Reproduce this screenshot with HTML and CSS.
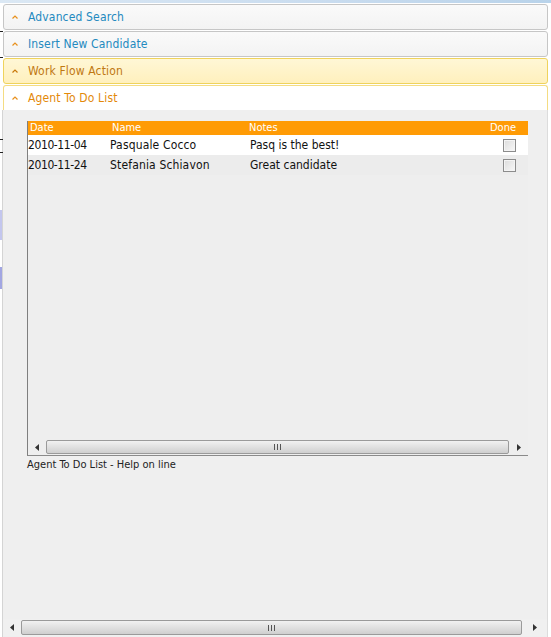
FILE: index.html
```html
<!DOCTYPE html>
<html>
<head>
<meta charset="utf-8">
<link rel="stylesheet" href="styles.css">
</head>
<body>
<div class="topstrip"></div>
<div class="edge-marks">
  <span class="mark m1"></span><span class="mark m2"></span><span class="mark m3"></span><span class="mark m4"></span>
  <span class="bluebar b1"></span><span class="bluebar b2"></span>
</div>
<div class="accordion">
  <div class="acc-head plain">
    <svg class="caret" viewBox="0 0 6 4" width="6" height="4"><path d="M0.5 3.5 L3 1 L5.5 3.5" fill="none" stroke="#e8901c" stroke-width="1.2"/></svg>
    <span>Advanced Search</span>
  </div>
  <div class="acc-head plain">
    <svg class="caret" viewBox="0 0 6 4" width="6" height="4"><path d="M0.5 3.5 L3 1 L5.5 3.5" fill="none" stroke="#e8901c" stroke-width="1.2"/></svg>
    <span>Insert New Candidate</span>
  </div>
  <div class="acc-head hover">
    <svg class="caret" viewBox="0 0 6 4" width="6" height="4"><path d="M0.5 3.5 L3 1 L5.5 3.5" fill="none" stroke="#c9780a" stroke-width="1.2"/></svg>
    <span>Work Flow Action</span>
  </div>
  <div class="acc-head active">
    <svg class="caret" viewBox="0 0 6 4" width="6" height="4"><path d="M0.5 3.5 L3 1 L5.5 3.5" fill="none" stroke="#e8901c" stroke-width="1.2"/></svg>
    <span>Agent To Do List</span>
  </div>
  <div class="panel">
    <div class="panel-inner">
      <div class="grid">
        <div class="grid-head">
          <span class="c-date">Date</span>
          <span class="c-name">Name</span>
          <span class="c-notes">Notes</span>
          <span class="c-done">Done</span>
        </div>
        <div class="row odd">
          <span class="c-date">2010-11-04</span>
          <span class="c-name">Pasquale Cocco</span>
          <span class="c-notes">Pasq is the best!</span>
          <span class="c-done"><span class="chk"></span></span>
        </div>
        <div class="row even">
          <span class="c-date">2010-11-24</span>
          <span class="c-name">Stefania Schiavon</span>
          <span class="c-notes">Great candidate</span>
          <span class="c-done"><span class="chk"></span></span>
        </div>
        <div class="grid-fill"></div>
        <div class="hscroll inner">
          <span class="arrow"><svg viewBox="0 0 4 7" width="4" height="7"><path d="M4 0 L0 3.5 L4 7Z" fill="#333"/></svg></span>
          <span class="thumb"><span class="grip"></span></span>
          <span class="arrow"><svg viewBox="0 0 4 7" width="4" height="7"><path d="M0 0 L4 3.5 L0 7Z" fill="#333"/></svg></span>
        </div>
      </div>
      <div class="help">Agent To Do List - Help on line</div>
    </div>
    <div class="hscroll outer">
      <span class="arrow"><svg viewBox="0 0 4 7" width="4" height="7"><path d="M4 0 L0 3.5 L4 7Z" fill="#333"/></svg></span>
      <span class="thumb"><span class="grip"></span></span>
      <span class="arrow"><svg viewBox="0 0 4 7" width="4" height="7"><path d="M0 0 L4 3.5 L0 7Z" fill="#333"/></svg></span>
    </div>
  </div>
</div>
</body>
</html>
```

FILE: styles.css
```css
html, body {
  margin: 0;
  padding: 0;
  background: #ffffff;
  width: 551px;
  height: 637px;
  overflow: hidden;
}
body {
  position: relative;
  font-family: "DejaVu Sans Condensed", "DejaVu Sans", sans-serif;
  font-size: 11px;
  color: #111;
}
.topstrip {
  height: 3px;
  background: linear-gradient(to right, #dbe8f4, #c9dcef 60%, #b9d3ea);
}
.edge-marks { position: absolute; left: 0; top: 0; width: 551px; height: 637px; pointer-events: none; }
.mark { position: absolute; left: 0; width: 3px; height: 1px; background: #222; }
.m1 { top: 31px; }
.m2 { top: 57px; }
.m3 { top: 139px; }
.m4 { top: 152px; }
.bluebar { position: absolute; left: 0; width: 2px; background: #c3c6ee; }
.b1 { top: 210px; height: 30px; }
.b2 { top: 267px; height: 22px; background: #a2a6e2; }

.accordion {
  margin: 1px 3px 0 3px;
  display: flex;
  flex-direction: column;
  gap: 1px;
}
.acc-head {
  box-sizing: border-box;
  height: 26px;
  border: 1px solid #c6c6c6;
  border-radius: 3px;
  display: flex;
  align-items: center;
  padding-left: 8px;
  gap: 10px;
  font-family: "DejaVu Sans Condensed", "DejaVu Sans", sans-serif;
  font-size: 12px;
  letter-spacing: 0.15px;
}
.acc-head .caret { flex: none; margin-top: -1px; }
.acc-head.plain {
  background: linear-gradient(#fafafa, #f3f3f3);
  color: #2389bf;
}
.acc-head.hover {
  background: linear-gradient(#fff7d6, #fff0bd);
  border-color: #efd35c;
  color: #c07812;
}
.acc-head.active {
  background: #ffffff;
  border-color: #f4dc82;
  border-bottom: none;
  border-radius: 3px 3px 0 0;
  color: #e3890a;
  height: 25px;
}
.panel {
  margin-top: -1px;
  margin-left: -1px;
  margin-right: 0;
  height: 527px;
  box-sizing: border-box;
  background: #efefef;
  border-left: 1px solid #d4d4d4;
  border-right: 1px solid #dcdcdc;
  display: flex;
  flex-direction: column;
  justify-content: space-between;
}
.panel-inner {
  padding: 11px 0 0 24px;
}
.grid {
  width: 501px;
  height: 335px;
  box-sizing: border-box;
  border-left: 1px solid #7f7f7f;
  border-bottom: 1px solid #8a8a8a;
  display: flex;
  flex-direction: column;
  background: #eeeeee;
}
.grid-head, .row {
  display: grid;
  grid-template-columns: 82px 139px 1fr 60px;
  align-items: center;
}
.grid-head {
  height: 14px;
  background: #ff9b05;
  color: #ffffff;
  font-size: 11px;
  line-height: 14px;
}
.grid-head .c-date { padding-left: 2px; }
.grid-head .c-name { padding-left: 2px; }
.grid-head .c-done { text-align: right; padding-right: 12px; }
.row {
  height: 20px;
  font-size: 12px;
  color: #111;
}
.row .c-date { letter-spacing: -0.4px; }
.row .c-name { letter-spacing: 0.15px; }
.row.odd { background: #ffffff; }
.row.even { background: #ececec; }
.row .c-notes { padding-left: 1px; }
.row .c-done { display: flex; justify-content: flex-end; padding-right: 12px; }
.chk {
  width: 11px;
  height: 11px;
  border: 1px solid #8c8c8c;
  background: linear-gradient(135deg, #dcdcdc, #f8f8f8);
  box-shadow: inset 0 0 0 1px #f4f4f4;
}
.grid-fill { flex: 1; }
.hscroll {
  display: flex;
  align-items: center;
  height: 16px;
  box-sizing: border-box;
}
.hscroll .arrow {
  flex: none;
  display: flex;
  align-items: center;
  justify-content: center;
}
.hscroll.inner .arrow { width: 18px; }
.hscroll .thumb {
  flex: 1;
  height: 14px;
  box-sizing: border-box;
  border: 1px solid #9a9a9a;
  border-radius: 2px;
  background: linear-gradient(#f1f1f1, #e0e0e0 50%, #cfcfcf);
  display: flex;
  align-items: center;
  justify-content: center;
}
.hscroll.inner .thumb { margin-right: 1px; }
.grip {
  width: 7px;
  height: 6px;
  background: repeating-linear-gradient(to right, #555 0 1px, transparent 1px 3px);
}
.help {
  margin-top: 2px;
  font-size: 11px;
  color: #222;
  line-height: 14px;
}
.hscroll.outer {
  height: 17px;
  margin-bottom: 1px;
  background: #f0f0f0;
}
.hscroll.outer .arrow { width: 18px; }
.hscroll.outer .thumb { height: 15px; }
.hscroll.outer .arrow:last-child { width: 25px; }
```
